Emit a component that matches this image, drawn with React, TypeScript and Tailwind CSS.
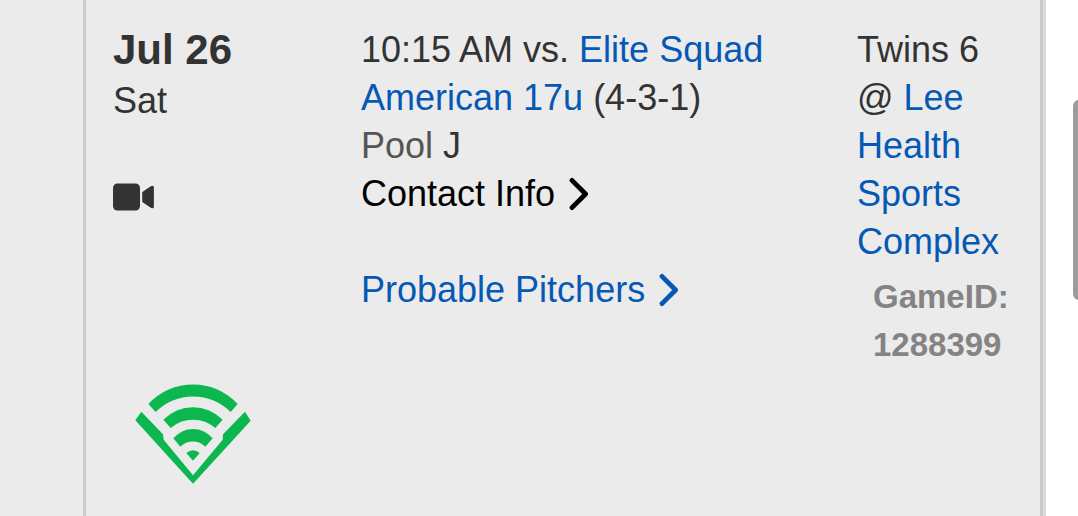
function VideoIcon() {
  return (
    <svg viewBox="0 0 41 28" className="block h-7 w-[41px]" fill="currentColor" role="img" aria-label="Video available">
      <rect x="0" y="0.4" width="27" height="27.2" rx="4.5" />
      <path d="M29.2 10Q29.2 9 30 8.4L37.8 3.3Q40.9 1.6 40.9 4.6V23.4Q40.9 26.4 37.8 24.7L30 19.6Q29.2 19 29.2 18Z" />
    </svg>
  );
}

function Chevron() {
  return (
    <svg viewBox="0 0 20 34" className="h-[34px] w-5 shrink-0" fill="none" stroke="currentColor" strokeWidth="4.8" strokeLinecap="round" strokeLinejoin="round" aria-hidden="true">
      <path d="M3 3.4 16.6 17 3 30.6" />
    </svg>
  );
}

function DiamondLogo() {
  return (
    <svg viewBox="45 40 348 300" className="block h-[100px] w-[116px]" fill="#0cb750" role="img" aria-label="Live stream">
      <path d="M85 100A182 182 0 0 1 353 100L332 124A159 159 0 0 0 107 124Z" />
      <path d="M130 147A125 125 0 0 1 308 147L286 172A102 102 0 0 0 152 172Z" />
      <path d="M160 203A76 76 0 0 1 278 203L256 228A53 53 0 0 0 181 228Z" />
      <path d="M199 247Q219 231 239 247L219 270Z" />
      <path d="M64 123 129 191 131 207 219 314 308 207 309 191 375 123 392 150 219 339 46 149Z" />
    </svg>
  );
}

const linkStyle = "text-[#0658b5]";

export default function App() {
  return (
    <div className="relative flex min-h-screen overflow-hidden bg-white font-['Liberation_Sans',Arial,sans-serif] text-4xl leading-[48px] text-[#333]">
      <aside className="w-[83px] shrink-0 bg-[#ebebeb]" />
      <main className="grid min-w-0 flex-1 grid-cols-[248px_1fr_155px] border-x-[3px] border-[#cbcbcb] bg-[#ebebeb] pt-[26px] pr-7 pl-[27px]">
        <section>
          <h2 className="mb-[3px] text-[42px] leading-[48px] font-bold">Jul 26</h2>
          <p>Sat</p>
          <div className="mt-[58px]">
            <VideoIcon />
          </div>
          <div className="mt-[173px] ml-[22px]">
            <DiamondLogo />
          </div>
        </section>
        <section className="pr-16">
          <p>
            10:15 AM vs. <a href="#team" className={linkStyle}>Elite Squad American 17u</a> (4-3-1)
          </p>
          <p>
            <span className="text-[#555]">Pool</span> J
          </p>
          <button type="button" className="flex items-center gap-[14px] text-black">
            Contact Info <Chevron />
          </button>
          <a href="#pitchers" className="mt-12 flex items-center gap-[14px] text-[#0658b5]">
            Probable Pitchers <Chevron />
          </a>
        </section>
        <section>
          <p>
            Twins 6 @ <a href="#venue" className={linkStyle}>Lee Health Sports Complex</a>
          </p>
          <p className="mt-[7px] pl-4 text-[33px] font-bold text-[#848484]">GameID: 1288399</p>
        </section>
      </main>
      <div className="w-[35px] shrink-0 border-l-[3px] border-[#dcdcdc]" />
      <div className="absolute top-[100px] -right-2 h-[200px] w-[13px] rounded-md bg-[#9c9c9c]" />
    </div>
  );
}
